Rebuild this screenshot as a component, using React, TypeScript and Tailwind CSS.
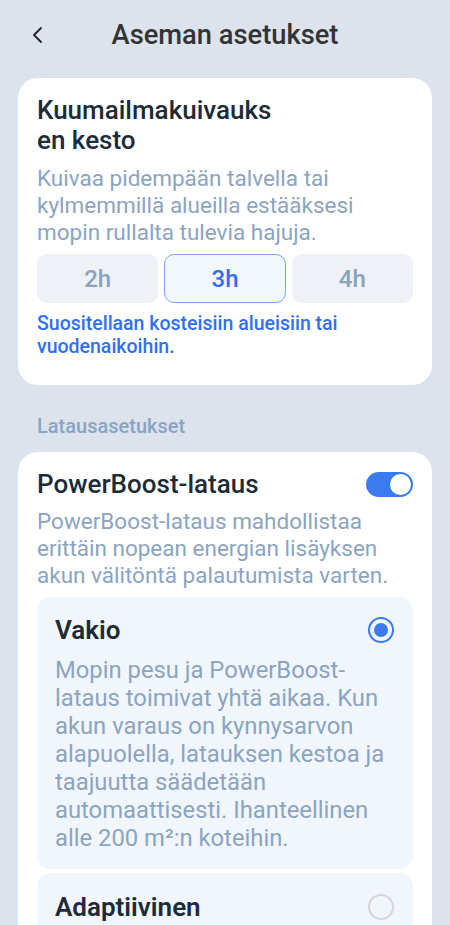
import React from "react";

export default function App() {
  return (
    <div
      className="min-h-[925px] w-[450px] bg-[#dce3ed] overflow-hidden"
      style={{ fontFamily: "Roboto, 'Noto Sans', sans-serif" }}
    >
      {/* Header */}
      <div className="relative flex h-[70px] items-center justify-center">
        <svg
          className="absolute left-[30px] top-[25px]"
          width="16"
          height="20"
          viewBox="0 0 16 20"
          fill="none"
        >
          <path d="M11 3 L4 10 L11 17" stroke="#222" strokeWidth="1.8" strokeLinecap="round" strokeLinejoin="round" />
        </svg>
        <h1 className="text-[27.3px] font-medium leading-[30px] text-[#333]">Aseman asetukset</h1>
      </div>

      {/* Card 1 */}
      <div className="mx-[18px] mt-[8px] rounded-[20px] bg-white px-[19px] pt-[17px] pb-[27px]">
        <div className="text-[26px] font-medium leading-[30px] text-[#1d2b38]">
          Kuumailmakuivauks
          <br />
          en kesto
        </div>
        <p className="mt-[10px] text-[22.5px] leading-[27px] text-[#8ba4bf]">
          Kuivaa pidempään talvella tai kylmemmillä alueilla estääksesi mopin rullalta tulevia hajuja.
        </p>
        <div className="mt-[8px] grid grid-cols-3 gap-[6px]">
          <button className="h-[49px] rounded-[10px] bg-[#eef1f5] text-[24px] font-medium text-[#8ba2bb]">2h</button>
          <button className="h-[49px] rounded-[10px] border border-[#7aa6f5] bg-[#f2f7fe] text-[24px] font-medium text-[#2f70e6]">3h</button>
          <button className="h-[49px] rounded-[10px] bg-[#eef1f5] text-[24px] font-medium text-[#8ba2bb]">4h</button>
        </div>
        <p className="mt-[9px] text-[19.5px] font-medium leading-[23px] text-[#2f70f0]">
          Suositellaan kosteisiin alueisiin tai vuodenaikoihin.
        </p>
      </div>

      {/* Section label */}
      <div className="mt-[30px] px-[37px] text-[20px] font-medium leading-[22px] text-[#88a3c3]">
        Latausasetukset
      </div>

      {/* Card 2 */}
      <div className="mx-[18px] mt-[15px] rounded-t-[20px] bg-white px-[19px] pt-[17px] pb-[20px]">
        <div className="flex items-center justify-between">
          <div className="text-[26px] font-medium leading-[30px] text-[#1d2b38]">PowerBoost-lataus</div>
          <div className="relative h-[25px] w-[47px] rounded-full bg-[#3b7bf0]">
            <div className="absolute right-[2px] top-[2px] h-[21px] w-[21px] rounded-full bg-white" />
          </div>
        </div>
        <p className="mt-[9px] text-[22.5px] leading-[27px] text-[#8ba4bf]">
          PowerBoost-lataus mahdollistaa erittäin nopean energian lisäyksen akun välitöntä palautumista varten.
        </p>

        <div className="mt-[8px] flex flex-col gap-[4px]">
          <div className="rounded-[14px] bg-[#f1f6fd] px-[18px] pt-[18px] pb-[17px]">
            <div className="flex items-center justify-between">
              <div className="text-[26px] font-semibold leading-[30px] text-[#1d2b38]">Vakio</div>
              <div className="mr-[1px] flex h-[26px] w-[26px] items-center justify-center rounded-full border-2 border-[#3b7bf0]">
                <div className="h-[14px] w-[14px] rounded-full bg-[#3b7bf0]" />
              </div>
            </div>
            <p className="mt-[11px] text-[23.8px] leading-[28px] text-[#8ba4bf]">
              Mopin pesu ja PowerBoost-lataus toimivat yhtä aikaa. Kun akun varaus on kynnysarvon alapuolella, latauksen kestoa ja taajuutta säädetään automaattisesti. Ihanteellinen alle 200 m²:n koteihin.
            </p>
          </div>
          <div className="rounded-[14px] bg-[#f1f6fd] px-[18px] pt-[19px] pb-[17px]">
            <div className="flex items-center justify-between">
              <div className="text-[26px] font-semibold leading-[30px] text-[#1d2b38]">Adaptiivinen</div>
              <div className="mr-[1px] h-[26px] w-[26px] rounded-full border-2 border-[#d2d4d8]" />
            </div>
          </div>
        </div>
      </div>
    </div>
  );
}
